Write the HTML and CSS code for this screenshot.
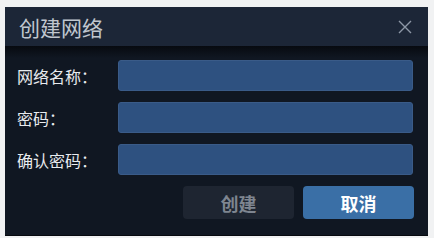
FILE: index.html
```html
<!DOCTYPE html>
<html lang="zh-CN">
<head>
  <meta charset="UTF-8">
  <title>创建网络</title>
  <link rel="stylesheet" href="styles.css">
</head>
<body>
  <div class="dialog">
    <div class="dialog-title">
      <span>创建网络</span>
      <svg class="close" width="14" height="14" viewBox="0 0 14 14">
        <path d="M1 1L13 13M13 1L1 13" stroke="#8d97a6" stroke-width="1.4" fill="none"/>
      </svg>
    </div>
    <div class="dialog-body">
      <div class="row">
        <label>网络名称：</label>
        <input class="field" type="text">
      </div>
      <div class="row">
        <label>密码：</label>
        <input class="field" type="password">
      </div>
      <div class="row">
        <label>确认密码：</label>
        <input class="field" type="password">
      </div>
      <div class="actions">
        <button class="btn btn-disabled">创建</button>
        <button class="btn btn-primary">取消</button>
      </div>
    </div>
  </div>
</body>
</html>
```

FILE: styles.css
```css
body {
  margin: 0;
  background: #f1f2f3;
  font-family: "Noto Sans CJK SC", "Noto Sans", sans-serif;
}
.dialog {
  margin: 7px 0 0 5px;
  width: 423px;
  height: 229px;
  background: #101722;
  border-bottom: 1px solid #070a0f;
  box-sizing: border-box;
  display: flex;
  flex-direction: column;
}
.dialog-title {
  height: 39px;
  background: #1c2637;
  display: flex;
  align-items: center;
  justify-content: space-between;
  padding: 0 16px 0 14px;
  color: #c0c6cf;
  font-size: 21px;
}
.dialog-body {
  flex: 1;
  padding: 14px 15px 0 12px;
  background: linear-gradient(#070a10, #101722 12px);
}
.row {
  display: flex;
  align-items: center;
  height: 31px;
  margin-bottom: 11px;
}
.row label {
  width: 101px;
  color: #e8ebef;
  font-size: 16px;
}
.field {
  flex: 1;
  height: 31px;
  box-sizing: border-box;
  border: 1px solid #3a5b88;
  border-radius: 3px;
  background: #2e5180;
  outline: none;
}
.actions {
  display: flex;
  justify-content: flex-end;
  gap: 9px;
  margin-top: 4px;
  margin-right: -1px;
}
.btn {
  width: 111px;
  height: 33px;
  border: none;
  border-radius: 4px;
  font-family: inherit;
  font-size: 18px;
  font-weight: bold;
}
.btn-disabled {
  background: #1e2531;
  color: #7e8590;
}
.btn-primary {
  background: #3a6fa6;
  color: #ffffff;
}
```
